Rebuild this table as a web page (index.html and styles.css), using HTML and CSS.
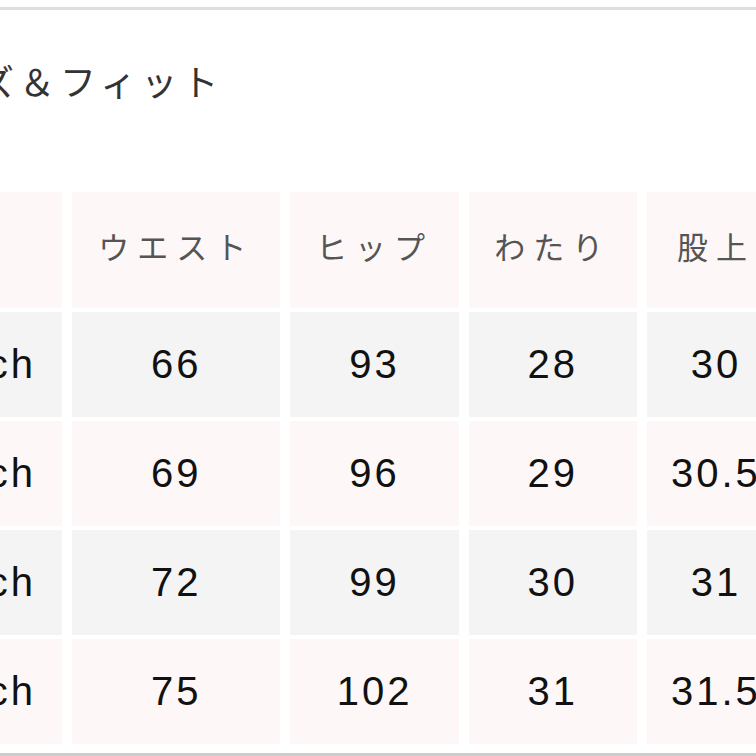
FILE: index.html
```html
<!DOCTYPE html>
<html lang="ja">
<head>
<meta charset="utf-8">
<title>サイズ＆フィット</title>
<link rel="stylesheet" href="styles.css">
</head>
<body>
<section class="size-section">
  <h2 class="size-title">サイズ＆フィット</h2>
  <table class="size-table">
    <colgroup>
      <col class="c-label">
      <col class="c-wide">
      <col class="c-std">
      <col class="c-std">
      <col class="c-narrow">
    </colgroup>
    <thead>
      <tr class="row-pink">
        <th></th>
        <th>ウエスト</th>
        <th>ヒップ</th>
        <th>わたり</th>
        <th>股上</th>
      </tr>
    </thead>
    <tbody>
      <tr class="row-gray">
        <td>26inch</td><td>66</td><td>93</td><td>28</td><td>30</td>
      </tr>
      <tr class="row-pink">
        <td>27inch</td><td>69</td><td>96</td><td>29</td><td>30.5</td>
      </tr>
      <tr class="row-gray">
        <td>28inch</td><td>72</td><td>99</td><td>30</td><td>31</td>
      </tr>
      <tr class="row-pink">
        <td>29inch</td><td>75</td><td>102</td><td>31</td><td>31.5</td>
      </tr>
    </tbody>
  </table>
  <div class="bottom-rule"></div>
</section>
</body>
</html>
```
FILE: styles.css
```css
html, body {
  margin: 0;
  padding: 0;
  background: #ffffff;
  overflow: hidden;
}

body {
  padding-top: 7px;
  font-family: "Liberation Sans", "Noto Sans CJK JP", sans-serif;
}

.size-section {
  border-top: 3px solid #dedede;
}

.size-title {
  margin: 52px 0 0 -103px;
  font-family: "Noto Sans CJK JP", sans-serif;
  font-weight: 400;
  font-size: 36px;
  line-height: 36px;
  letter-spacing: 5px;
  color: #333333;
  white-space: nowrap;
}

.size-table {
  width: 931px;
  margin: 90px 0 0 -136px;
  border-collapse: separate;
  border-spacing: 10px 4px;
  table-layout: fixed;
}

.c-label {
  width: 188px;
}

.c-wide {
  width: 208px;
}

.c-std {
  width: 168px;
}

.c-narrow {
  width: 138px;
}

.size-table th,
.size-table td {
  padding: 0;
  text-align: center;
  vertical-align: middle;
  white-space: nowrap;
}

.size-table th {
  height: 116px;
  font-family: "Noto Sans CJK JP", sans-serif;
  font-weight: 400;
  font-size: 31px;
  letter-spacing: 8px;
  color: #555555;
  padding-bottom: 10px;
  box-sizing: border-box;
}

.size-table td {
  height: 105px;
  font-size: 40px;
  letter-spacing: 3px;
  color: #111111;
}

.row-pink th,
.row-pink td {
  background: #fdf8f7;
}

.row-gray td {
  background: #f4f4f4;
}

.bottom-rule {
  margin-top: 5px;
  border-top: 3px solid #cccccc;
}
```
